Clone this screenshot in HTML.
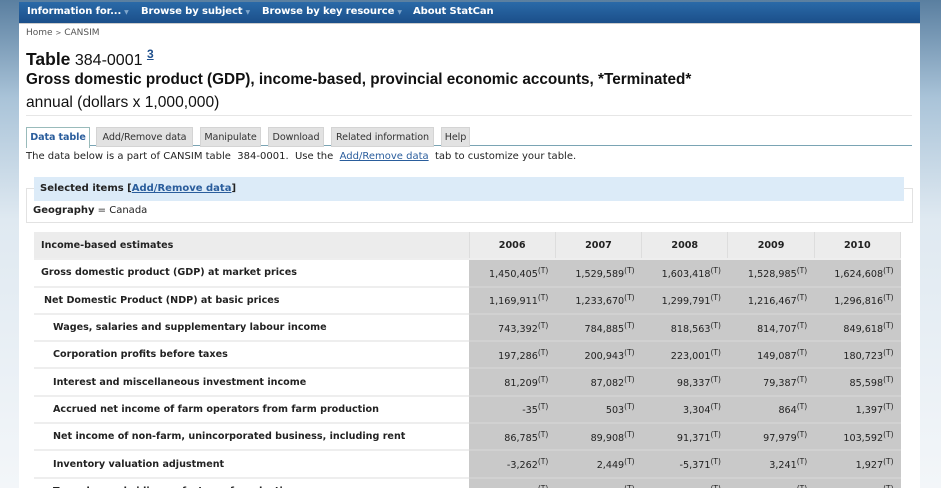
<!DOCTYPE html>
<html style="overflow:hidden;width:941px;height:488px"><head><meta charset="utf-8"><style>
*{margin:0;padding:0;box-sizing:border-box}
body{width:941px;height:488px;overflow:hidden;position:relative;font-family:"DejaVu Sans","Liberation Sans",sans-serif;background:linear-gradient(180deg,#5a7fa0 0%,#a9c3d8 20%,#dfe9f1 45%,#f3f6f9 100%)}
#nav{position:absolute;left:19px;top:2px;width:901px;height:21px;background:linear-gradient(#2a6aa8,#1b4f8a);color:#fff;font-size:10px;font-weight:bold;letter-spacing:-0.1px}
#nav span{position:absolute;top:4px;white-space:nowrap}
#nav i{font-style:normal;color:#7fa6cc;font-size:6px;margin-left:3px}
#main{position:absolute;left:19px;top:23px;width:901px;height:465px;background:#fff;border-top:1px solid #ccc}
.a{position:absolute;white-space:nowrap}
.tab{position:absolute;top:127px;height:20px;background:#e2e2e2;border:1px solid #d4d4d4;font-size:9.6px;color:#333;padding:4px 0 0;text-align:center;white-space:nowrap;letter-spacing:-0.1px}
table{position:absolute;left:34px;top:232px;border-collapse:collapse;font-size:9.6px;color:#222;table-layout:fixed;width:867px}
td,th{height:27.3px;border-bottom:2px solid #eee;white-space:nowrap;overflow:hidden}
th{background:#ececec;font-weight:bold;text-align:center;border-right:1px solid #ddd}
td.l{font-weight:bold;padding-left:7px;background:#fff}
td.n{background:#c9c9c9;text-align:right;padding-right:7px;border-bottom:2px solid #d1d1d1}
sup{font-size:7.5px;vertical-align:4px}
</style></head><body>
<div id="nav">
<span style="left:8px">Information for...<i>▼</i></span>
<span style="left:122px">Browse by subject<i>▼</i></span>
<span style="left:243px">Browse by key resource<i>▼</i></span>
<span style="left:394px">About StatCan</span>
</div>
<div id="main"></div>
<div class="a" style="left:26px;top:28px;font-size:9px;color:#555">Home <span style="font-size:7px">&gt;</span> CANSIM</div>
<div class="a" style="left:26px;top:47px;font-family:'Liberation Sans',sans-serif;font-size:16px;color:#111"><b style="font-size:17.5px">Table</b> 384-0001 <sup style="font-size:12px;vertical-align:7px;color:#1f4f8c;text-decoration:underline;font-weight:bold">3</sup></div>
<div class="a" style="left:26px;top:71px;font-family:'Liberation Sans',sans-serif;font-size:15.3px;font-weight:bold;color:#111">Gross domestic product (GDP), income-based, provincial economic accounts, *Terminated*</div>
<div class="a" style="left:26px;top:94px;font-family:'Liberation Sans',sans-serif;font-size:15.6px;color:#111">annual (dollars x 1,000,000)</div>
<div class="a" style="left:26px;top:115px;width:886px;height:1px;background:#e6e6e6"></div>
<div class="a" style="left:26px;top:145px;width:886px;height:1px;background:#7aa4b4"></div>
<div class="tab" style="left:26px;width:64px;background:#fff;border-color:#9bb;border-bottom:none;height:21px;color:#2a5d9c;font-weight:bold">Data table</div>
<div class="tab" style="left:96px;width:97px">Add/Remove data</div>
<div class="tab" style="left:200px;width:61px">Manipulate</div>
<div class="tab" style="left:268px;width:56px">Download</div>
<div class="tab" style="left:331px;width:103px">Related information</div>
<div class="tab" style="left:441px;width:29px">Help</div>
<div class="a" style="left:26px;top:151px;font-size:10px;color:#222">The data below is a part of CANSIM table&nbsp; 384-0001.&nbsp; Use the&nbsp; <span style="color:#2a5d9c;text-decoration:underline">Add/Remove data</span>&nbsp; tab to customize your table.</div>
<div class="a" style="left:26px;top:188px;width:887px;height:35px;border:1px solid #e2e2e2"></div>
<div class="a" style="left:34px;top:177px;width:870px;height:24px;background:#dcebf8;font-size:10px;font-weight:bold;color:#222;padding:6px 0 0 6px">Selected items [<span style="color:#2a5d9c;text-decoration:underline">Add/Remove data</span>]</div>
<div class="a" style="left:33px;top:205px;font-size:10px;color:#222"><b>Geography</b> = Canada</div>
<table>
<colgroup><col style="width:435px"><col><col><col><col><col></colgroup>
<tr><th style="text-align:left;padding-left:7px">Income-based estimates</th><th>2006</th><th>2007</th><th>2008</th><th>2009</th><th>2010</th></tr>
<tr><td class="l">Gross domestic product (GDP) at market prices</td><td class="n">1,450,405<sup>(T)</sup></td><td class="n">1,529,589<sup>(T)</sup></td><td class="n">1,603,418<sup>(T)</sup></td><td class="n">1,528,985<sup>(T)</sup></td><td class="n">1,624,608<sup>(T)</sup></td></tr>
<tr><td class="l" style="padding-left:10px">Net Domestic Product (NDP) at basic prices</td><td class="n">1,169,911<sup>(T)</sup></td><td class="n">1,233,670<sup>(T)</sup></td><td class="n">1,299,791<sup>(T)</sup></td><td class="n">1,216,467<sup>(T)</sup></td><td class="n">1,296,816<sup>(T)</sup></td></tr>
<tr><td class="l" style="padding-left:19px">Wages, salaries and supplementary labour income</td><td class="n">743,392<sup>(T)</sup></td><td class="n">784,885<sup>(T)</sup></td><td class="n">818,563<sup>(T)</sup></td><td class="n">814,707<sup>(T)</sup></td><td class="n">849,618<sup>(T)</sup></td></tr>
<tr><td class="l" style="padding-left:19px">Corporation profits before taxes</td><td class="n">197,286<sup>(T)</sup></td><td class="n">200,943<sup>(T)</sup></td><td class="n">223,001<sup>(T)</sup></td><td class="n">149,087<sup>(T)</sup></td><td class="n">180,723<sup>(T)</sup></td></tr>
<tr><td class="l" style="padding-left:19px">Interest and miscellaneous investment income</td><td class="n">81,209<sup>(T)</sup></td><td class="n">87,082<sup>(T)</sup></td><td class="n">98,337<sup>(T)</sup></td><td class="n">79,387<sup>(T)</sup></td><td class="n">85,598<sup>(T)</sup></td></tr>
<tr><td class="l" style="padding-left:19px">Accrued net income of farm operators from farm production</td><td class="n">-35<sup>(T)</sup></td><td class="n">503<sup>(T)</sup></td><td class="n">3,304<sup>(T)</sup></td><td class="n">864<sup>(T)</sup></td><td class="n">1,397<sup>(T)</sup></td></tr>
<tr><td class="l" style="padding-left:19px">Net income of non-farm, unincorporated business, including rent</td><td class="n">86,785<sup>(T)</sup></td><td class="n">89,908<sup>(T)</sup></td><td class="n">91,371<sup>(T)</sup></td><td class="n">97,979<sup>(T)</sup></td><td class="n">103,592<sup>(T)</sup></td></tr>
<tr><td class="l" style="padding-left:19px">Inventory valuation adjustment</td><td class="n">-3,262<sup>(T)</sup></td><td class="n">2,449<sup>(T)</sup></td><td class="n">-5,371<sup>(T)</sup></td><td class="n">3,241<sup>(T)</sup></td><td class="n">1,927<sup>(T)</sup></td></tr>
<tr><td class="l" style="padding-left:19px">Taxes less subsidies on factors of production</td><td class="n"><sup>(T)</sup></td><td class="n"><sup>(T)</sup></td><td class="n"><sup>(T)</sup></td><td class="n"><sup>(T)</sup></td><td class="n"><sup>(T)</sup></td></tr>
</table>
</body></html>
